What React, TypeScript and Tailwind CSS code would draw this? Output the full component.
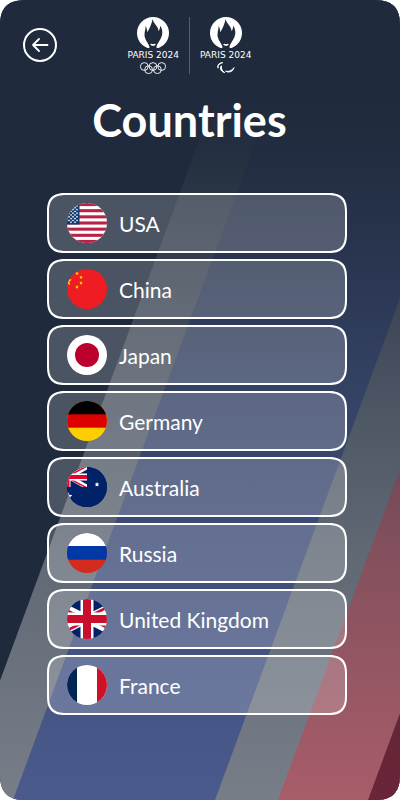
import type { ReactNode } from "react";

function Backdrop() {
  return (
    <svg
      className="absolute inset-0 h-full w-full"
      viewBox="0 0 400 800"
      preserveAspectRatio="none"
      aria-hidden="true"
    >
      <defs>
        <linearGradient id="fade" gradientUnits="userSpaceOnUse" x1="0" y1="0" x2="0" y2="800">
          <stop offset="0.13" stopColor="#1f2a3c" stopOpacity="1" />
          <stop offset="0.2" stopColor="#1f2a3c" stopOpacity="0.93" />
          <stop offset="0.31" stopColor="#1f2a3c" stopOpacity="0.78" />
          <stop offset="0.5" stopColor="#1f2a3c" stopOpacity="0.49" />
          <stop offset="0.69" stopColor="#1f2a3c" stopOpacity="0.26" />
          <stop offset="1" stopColor="#1f2a3c" stopOpacity="0" />
        </linearGradient>
      </defs>
      <path d="M-44 800L251 0H900V800Z" fill="#777e88" />
      <path d="M13 800L308 0H900V800Z" fill="#4a5a8d" />
      <path d="M215 800L510 0H900V800Z" fill="#777e88" />
      <path d="M278 800L573 0H900V800Z" fill="#a85d69" />
      <path d="M368 800L663 0H900V800Z" fill="#6b2538" />
      <rect width="400" height="800" fill="url(#fade)" />
    </svg>
  );
}

function Emblem({ children }: { children: ReactNode }) {
  return (
    <div className="flex flex-col items-center">
      <svg className="h-8 w-8" viewBox="0 0 96 96" aria-hidden="true">
        <circle cx="48" cy="48" r="48" fill="#fff" />
        <path
          d="M47 6C49 20 64 27 65 43C68 38 69 32 70 26C78 40 77 51 73 61C69 72 60 79 58 91L66 97H30L38 91C35 79 26 72 23 59C21 48 26 36 26 26C29 32 30 38 31 46C39 32 43 22 47 6Z"
          fill="#1f2a3c"
        />
        <path d="M39 82Q44 79 48 82Q52 79 57 82Q48 92 39 82Z" fill="#fff" />
      </svg>
      <span className="mt-0.5 font-['DejaVu_Sans'] text-[9px] leading-[9px] whitespace-nowrap">
        PARIS 2024
      </span>
      <div className="mt-0.5">{children}</div>
    </div>
  );
}

function Rings() {
  return (
    <svg className="h-3 w-7" viewBox="0 0 28 12" fill="none" stroke="#fff" strokeWidth="0.9" aria-hidden="true">
      <circle cx="5.3" cy="4.5" r="3.9" />
      <circle cx="14" cy="4.5" r="3.9" />
      <circle cx="22.7" cy="4.5" r="3.9" />
      <circle cx="9.6" cy="7.7" r="3.9" />
      <circle cx="18.4" cy="7.7" r="3.9" />
    </svg>
  );
}

function Agitos() {
  return (
    <svg className="h-3 w-7" viewBox="0 0 28 12" fill="#fff" stroke="#fff" aria-hidden="true">
      <path d="M10.8 0.6C7.2 0.6 4.8 3.2 6.2 6.2C5.3 3.2 8 1.6 10.8 0.6Z" strokeWidth="0.9" />
      <path d="M9.4 3.8C7.4 6.6 9 9.8 12.8 10.6C10 8.8 9 6.8 9.4 3.8Z" strokeWidth="1" />
      <path d="M22 5.6C21 9.2 17.6 11.2 13.6 9.2C17.4 10 20 8.4 22 5.6Z" strokeWidth="1" />
    </svg>
  );
}

const STAR = "M0-1L.29-.4L.95-.31L.48.15L.59.81L0 .5L-.59.81L-.48.15L-.95-.31L-.29-.4Z";

function Star({ x, y, r, fill }: { x: number; y: number; r: number; fill: string }) {
  return <path d={STAR} fill={fill} transform={`translate(${x} ${y}) scale(${r})`} />;
}

const stripes = [0, 1, 2, 3, 4, 5, 6];

const flags: Record<string, ReactNode> = {
  USA: (
    <>
      <rect width="40" height="40" fill="#fff" />
      {stripes.map((i) => (
        <rect key={i} y={(i * 80) / 13} width="40" height={40 / 13} fill="#b82246" />
      ))}
      <rect width="12.5" height="21.5" fill="#123c70" />
      {[3, 6.6, 10.2, 13.8, 17.4].map((y) =>
        [2, 6, 10].map((x) => <Star key={`${x}-${y}`} x={x} y={y} r={1.2} fill="#fff" />),
      )}
      {[4.8, 8.4, 12, 15.6, 19.2].map((y) =>
        [4, 8].map((x) => <Star key={`${x}-${y}`} x={x} y={y} r={1.2} fill="#fff" />),
      )}
    </>
  ),
  China: (
    <>
      <rect width="40" height="40" fill="#f01c24" />
      <Star x={0} y={12} r={5} fill="#ffd400" />
      <Star x={10} y={4.4} r={1.9} fill="#ffd400" />
      <Star x={14} y={8.3} r={1.9} fill="#ffd400" />
      <Star x={14} y={14} r={1.9} fill="#ffd400" />
      <Star x={10} y={18} r={1.9} fill="#ffd400" />
    </>
  ),
  Japan: (
    <>
      <rect width="40" height="40" fill="#fff" />
      <circle cx="20" cy="20" r="12" fill="#bc002d" />
    </>
  ),
  Germany: (
    <>
      <rect width="40" height="40" fill="#ffce00" />
      <rect width="40" height="26.7" fill="#dd0000" />
      <rect width="40" height="13.3" fill="#000" />
    </>
  ),
  Australia: (
    <>
      <rect width="40" height="40" fill="#012169" />
      <path d="M-20 -2L20 20M-20 22L20 0" stroke="#fff" strokeWidth="4.4" />
      <path d="M0 10.5L20 20.8M0 9.5L20 -0.8" stroke="#e4002b" strokeWidth="1.5" />
      <path d="M0 10H20M0 10V20" stroke="#fff" strokeWidth="7" />
      <path d="M0 10H20" stroke="#e4002b" strokeWidth="4" />
      <path d="M0 10V20" stroke="#e4002b" strokeWidth="5" />
      <path d="M20 0H40V40H0V20H20Z" fill="#012169" />
      <Star x={30} y={17.5} r={2.4} fill="#fff" />
      <Star x={1} y={29.5} r={4.5} fill="#fff" />
    </>
  ),
  Russia: (
    <>
      <rect width="40" height="40" fill="#d52b1e" />
      <rect width="40" height="26.7" fill="#0039a6" />
      <rect width="40" height="13" fill="#fff" />
    </>
  ),
  "United Kingdom": (
    <>
      <rect width="40" height="40" fill="#012169" />
      <path d="M-20 0L60 40M-20 40L60 0" stroke="#fff" strokeWidth="8" />
      <path d="M-20 1.5L20 21.5M-20 41.5L20 21.5M60 38.5L20 18.5M60 -1.5L20 18.5" stroke="#c8102e" strokeWidth="2.7" />
      <path d="M20 0V40M0 20H40" stroke="#fff" strokeWidth="13" />
      <path d="M20 0V40M0 20H40" stroke="#c8102e" strokeWidth="8" />
    </>
  ),
  France: (
    <>
      <rect width="40" height="40" fill="#fff" />
      <rect width="10" height="40" fill="#002654" />
      <rect x="30" width="10" height="40" fill="#ce1126" />
    </>
  ),
};

const countries = Object.keys(flags);

export default function App() {
  return (
    <div className="relative isolate min-h-screen overflow-hidden rounded-[28px] bg-[#1f2a3c] font-[Lato,sans-serif] text-white [corner-shape:superellipse(1.5)]">
      <Backdrop />
      <div className="relative">
        <header className="grid grid-cols-[1fr_auto_1fr] items-center pt-4 pr-11 pl-[23px]">
          <button
            type="button"
            aria-label="Back"
            className="flex size-[34px] items-center justify-center rounded-full border-2 border-white"
          >
            <svg
              className="h-4 w-[18px]"
              viewBox="0 0 18 16"
              fill="none"
              stroke="#fff"
              strokeWidth="1.8"
              strokeLinecap="round"
              strokeLinejoin="round"
              aria-hidden="true"
            >
              <path d="M16.5 8H2M8 2L2 8L8 14" />
            </svg>
          </button>
          <div className="flex pt-px">
            <Emblem>
              <Rings />
            </Emblem>
            <div className="mx-2.5 w-px bg-white/25" />
            <Emblem>
              <Agitos />
            </Emblem>
          </div>
        </header>
        <h1 className="mt-4 pr-[21px] text-center text-[45px] leading-[60px] font-bold">Countries</h1>
        <ul className="mt-[43px] flex flex-col gap-1.5 pr-[53px] pb-10 pl-[47px]">
          {countries.map((name) => (
            <li key={name}>
              <button
                type="button"
                className="flex h-[60px] w-full items-center gap-3 rounded-[20px] border-2 border-white bg-white/20 px-[18px] text-left text-[21px] leading-7 [corner-shape:superellipse(1.5)]"
              >
                <svg className="size-10 shrink-0 rounded-full" viewBox="0 0 40 40" aria-hidden="true">
                  {flags[name]}
                </svg>
                <span className="pt-0.5">{name}</span>
              </button>
            </li>
          ))}
        </ul>
      </div>
    </div>
  );
}
